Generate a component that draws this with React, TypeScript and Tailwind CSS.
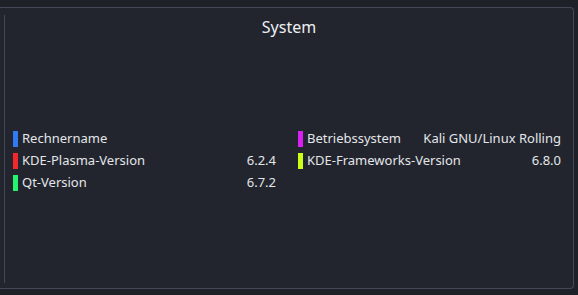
const LEFT = [
  { label: "Rechnername", value: "", color: "bg-[#3179f5]" },
  { label: "KDE-Plasma-Version", value: "6.2.4", color: "bg-[#f2282c]" },
  { label: "Qt-Version", value: "6.7.2", color: "bg-[#25f26f]" },
];

const RIGHT = [
  { label: "Betriebssystem", value: "Kali GNU/Linux Rolling", color: "bg-[#d820f2]" },
  { label: "KDE-Frameworks-Version", value: "6.8.0", color: "bg-[#cbff16]" },
];

function Row({ label, value, color }: { label: string; value: string; color: string }) {
  return (
    <div className="flex h-[22px] items-center">
      <span className={`h-4 w-[5px] shrink-0 ${color}`} />
      <span className="ml-[4px] flex-1 truncate">{label}</span>
      <span className="shrink-0">{value}</span>
    </div>
  );
}

export default function App() {
  return (
    <div
      className="h-[295px] w-[578px] overflow-hidden bg-[#1f2129] pt-[7px] text-[13px] text-[#e4e5e9]"
      style={{ fontFamily: '"Noto Sans", sans-serif' }}
    >
      <div className="flex h-[282px] w-[574px] rounded-r-[4px] border-y border-r border-[#444755] bg-[#22252e]">
        <div className="ml-[4px] mt-[7px] mb-[5px] w-px bg-[#444755]" />
        <div className="flex flex-1 flex-col">
          <h1 className="mt-[8px] text-center text-[16px] leading-[22px] text-[#eeeff2]">System</h1>
          <div className="mt-[90px] ml-[8px] grid w-[548px] grid-cols-2 gap-x-[22px]">
            <div className="flex flex-col">
              {LEFT.map((r) => (
                <Row key={r.label} {...r} />
              ))}
            </div>
            <div className="flex flex-col">
              {RIGHT.map((r) => (
                <Row key={r.label} {...r} />
              ))}
            </div>
          </div>
        </div>
      </div>
    </div>
  );
}
